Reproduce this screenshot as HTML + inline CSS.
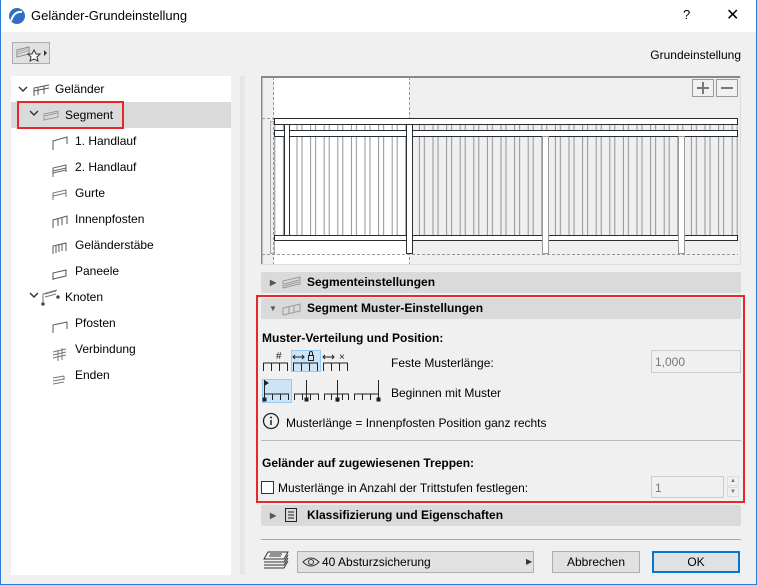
<!DOCTYPE html>
<html><head><meta charset="utf-8"><style>
*{box-sizing:border-box;margin:0;padding:0}
body{width:757px;height:585px;overflow:hidden;background:#f0f0f0;font-family:"Liberation Sans",sans-serif;font-size:12px;color:#000;position:relative}
.a{position:absolute}
.title{left:0;top:0;width:757px;height:32px;background:#fff}
.bl{left:0;top:0;width:1px;height:585px;background:#2b7cd3}
.br{right:0;top:0;width:1px;height:585px;background:#2b7cd3}
.bb{left:0;bottom:0;width:757px;height:1px;background:#2b7cd3}
.tree{left:11px;top:76px;width:220px;height:499px;background:#fff}
.ti{position:absolute;height:26px;line-height:26px;font-size:12px}
.hdr{background:#dadada;border-radius:2px;height:21px;font-weight:bold;line-height:21px}
.btn{background:#e1e1e1;border:1px solid #adadad;text-align:center;line-height:20px}
.b{font-weight:bold}
</style></head><body>
<div class="a title"></div>
<svg class="a" style="left:8px;top:7px" width="18" height="18" viewBox="0 0 18 18"><circle cx="9" cy="9" r="8" fill="#2f6fc4"/><path d="M3 14 Q6 4 14 5" stroke="#fff" stroke-width="2" fill="none"/></svg>
<div class="a" style="left:31px;top:8px;font-size:13px">Geländer-Grundeinstellung</div>
<div class="a" style="left:683px;top:7px;font-size:13px">?</div>
<div class="a" style="left:726px;top:5px;font-size:16px">✕</div>
<div class="a bl"></div><div class="a br"></div><div class="a bb"></div>

<div class="a" style="left:12px;top:42px;width:38px;height:22px;background:#e1e1e1;border:1px solid #adadad"></div>
<svg class="a" style="left:15px;top:44px" width="34" height="18"><path d="M2 6 L14 3 L14 10 L2 13Z" fill="none" stroke="#888"/><path d="M3 8 L13 5 M3 10 L13 7" stroke="#aaa"/><path d="M19 6 L21 10 L25 10 L22 13 L23 17 L19 15 L15 17 L16 13 L13 10 L17 10Z" fill="#fff" stroke="#333"/><path d="M29 6 L32 9 L29 12Z" fill="#333"/></svg>
<div class="a" style="right:16px;top:48px">Grundeinstellung</div>

<div class="a tree"></div>
<div class="a" style="left:11px;top:102px;width:220px;height:26px;background:#dadada"></div>
<div class="a" style="left:17px;top:101px;width:107px;height:28px;border:2px solid #e8262b"></div>
<div class="a" style="left:240px;top:76px;width:5px;height:499px;background:#e6e6e6"></div>
<svg class="a" style="left:16px;top:80px" width="60" height="310" fill="none" stroke="#555">
<g stroke="#333" stroke-width="1.4"><path d="M3 7 L7 11 L11 7"/><path d="M14 31 L18 35 L22 31"/><path d="M14 213 L18 217 L22 213"/></g>
<path d="M18 16 V8 L33 5 M22 15 V8 M28 14 V6 M18 11 L33 8" />
<path d="M28 40 V34 L42 31 V37Z M29 36 L41 33" stroke="#999"/>
<path d="M37 70 V61 L51 57 V64" />
<path d="M37 97 V88 L50 85 V92 M37 91 L50 88 M37 93 L50 90" stroke="#666"/>
<path d="M37 120 V113 L50 110 V117 M37 116 L50 113" stroke="#777"/>
<path d="M37 148 V140 L51 136 V144 M42 146 V139 M46 145 V138"/>
<path d="M37 174 V166 L50 163 V171 M40 166 V173 M43 165 V172 M46 164 V171"/>
<path d="M37 200 V193 L50 190 V196 L37 199Z" />
<path d="M27 224 V214 L41 210 M29 214 L40 211 M29 217 L40 214" stroke="#777"/><circle cx="27" cy="224" r="1.3" fill="#333"/><circle cx="42" cy="217" r="1.3" fill="#333"/>
<path d="M37 253 V245 L51 242 V249" />
<path d="M37 272 L50 269 M37 275 L50 272 M37 278 L50 275 M42 281 V270 M46 280 V268" stroke="#777"/>
<path d="M37 298 L48 296 M37 301 L48 299 M37 304 L48 302 M48 296 V300" stroke="#777"/>
</svg>
<div class="ti" style="left:55px;top:76px">Geländer</div>
<div class="ti" style="left:65px;top:102px">Segment</div>
<div class="ti" style="left:75px;top:128px">1. Handlauf</div>
<div class="ti" style="left:75px;top:154px">2. Handlauf</div>
<div class="ti" style="left:75px;top:180px">Gurte</div>
<div class="ti" style="left:75px;top:206px">Innenpfosten</div>
<div class="ti" style="left:75px;top:232px">Geländerstäbe</div>
<div class="ti" style="left:75px;top:258px">Paneele</div>
<div class="ti" style="left:65px;top:284px">Knoten</div>
<div class="ti" style="left:75px;top:310px">Pfosten</div>
<div class="ti" style="left:75px;top:336px">Verbindung</div>
<div class="ti" style="left:75px;top:362px">Enden</div>

<svg class="a" style="left:261px;top:76px" width="480" height="189" viewBox="261 76 480 189">
<defs><pattern id="bal" patternUnits="userSpaceOnUse" x="296.5" y="0" width="13.6" height="300"><path d="M0.5 0 V300 M5.5 0 V300" stroke="#8e9499" stroke-width="1"/></pattern></defs>
<rect x="261" y="76" width="480" height="189" fill="#efefef"/>
<rect x="274" y="77" width="135" height="187" fill="#fff"/>
<path d="M261.5 76 V264 M261 77 H741" stroke="#888" stroke-width="2"/>
<path d="M740.5 76 V264 M261 264.5 H741" stroke="#ddd"/>
<rect x="274" y="124" width="464" height="111" fill="url(#bal)"/>
<path d="M273.5 77 V264 M409.5 77 V264 M262 118.5 H274 M262 254.5 H738" stroke="#999" stroke-dasharray="3 2"/>
<rect x="270.5" y="121.5" width="4" height="132" fill="none" stroke="#aaa"/>
<rect x="274.5" y="118.5" width="463" height="6" fill="#fff" stroke="#262c30"/>
<rect x="274.5" y="130.5" width="463" height="6" fill="#fff" stroke="#262c30"/>
<rect x="274.5" y="235.5" width="463" height="5" fill="#fff" stroke="#262c30"/>
<rect x="284.5" y="124.5" width="5" height="111" fill="#fff" stroke="#262c30"/>
<rect x="406.5" y="124.5" width="6" height="129" fill="#fff" stroke="#262c30"/>
<rect x="542.5" y="136.5" width="6" height="117" fill="#fff" stroke="#999"/>
<rect x="678.5" y="136.5" width="6" height="117" fill="#fff" stroke="#999"/>
<rect x="692.5" y="79.5" width="21" height="17" fill="#f0f0f0" stroke="#999"/>
<rect x="716.5" y="79.5" width="21" height="17" fill="#f0f0f0" stroke="#999"/>
<path d="M697 88 H709 M703 82 V94 M721 88 H733" stroke="#777" stroke-width="2"/>
</svg>

<div class="a hdr" style="left:261px;top:272px;width:480px"><span style="position:absolute;left:9px;font-size:8px;color:#555">▶</span><span style="position:absolute;left:46px">Segmenteinstellungen</span></div>
<svg class="a" style="left:281px;top:275px" width="22" height="15" fill="none" stroke="#999"><path d="M2 13 V6 L19 2 V9Z M3 9 L18 5 M3 11 L18 7"/></svg>

<div class="a" style="left:256px;top:295px;width:489px;height:208px;border:2px solid #e8262b"></div>
<div class="a hdr" style="left:261px;top:298px;width:480px"><span style="position:absolute;left:8px;font-size:8px;color:#555">▼</span><span style="position:absolute;left:46px">Segment Muster-Einstellungen</span></div>
<svg class="a" style="left:281px;top:302px" width="22" height="15" fill="none" stroke="#999"><path d="M2 13 V6 L19 2 V9 L2 13 M8 12 V4 M13 11 V3"/></svg>
<div class="a b" style="left:262px;top:331px">Muster-Verteilung und Position:</div>
<div class="a" style="left:291px;top:350px;width:30px;height:22px;background:#cce4f7;border:1px solid #99c9ef"></div>
<div class="a" style="left:262px;top:379px;width:30px;height:24px;background:#cce4f7;border:1px solid #99c9ef"></div>
<svg class="a" style="left:262px;top:350px" width="120" height="55" fill="none" stroke="#222">
<path d="M1 13 H26 M1.5 13 V21 M9.5 13 V21 M17.5 13 V21 M25.5 13 V21"/><text x="14" y="9" font-size="10" fill="#222" stroke="none" font-family="Liberation Sans">#</text>
<path d="M31 13 H56 M31.5 13 V21 M39.5 13 V21 M47.5 13 V21 M55.5 13 V21 M31 7 H42 M33 5 L31 7 L33 9 M40 5 L42 7 L40 9"/><rect x="46.5" y="5.5" width="5" height="5"/><path d="M47.5 5 V3 A1.5 1.5 0 0 1 50.5 3 V5"/>
<path d="M61 13 H86 M61.5 13 V21 M69.5 13 V21 M77.5 13 V21 M85.5 13 V21 M61 7 H72 M63 5 L61 7 L63 9 M70 5 L72 7 L70 9"/><text x="77" y="10" font-size="10" fill="#222" stroke="none" font-family="Liberation Sans">×</text>
<path d="M2 44 H27 M2.5 30 V50 M10.5 44 V50 M18.5 44 V50 M26.5 44 V50"/><path d="M3 31 L6 33 L3 35Z" fill="#222"/><rect x="1" y="48" width="3" height="3" fill="#222"/>
<path d="M32 44 H57 M32.5 44 V50 M40.5 44 V50 M48.5 44 V50 M56.5 44 V50 M44.5 30 V50"/><rect x="43" y="48" width="3" height="3" fill="#222"/>
<path d="M62 44 H87 M62.5 44 V50 M69.5 44 V50 M80.5 44 V50 M86.5 44 V50 M75.5 30 V52"/><rect x="74" y="48" width="3" height="3" fill="#222"/>
<path d="M92 44 H117 M92.5 44 V50 M100.5 44 V50 M108.5 44 V50 M116.5 30 V50"/><rect x="115" y="48" width="3" height="3" fill="#222"/>
</svg>
<div class="a" style="left:391px;top:356px">Feste Musterlänge:</div>
<div class="a" style="left:391px;top:386px">Beginnen mit Muster</div>
<div class="a" style="left:651px;top:350px;width:90px;height:23px;border:1px solid #ccc;background:#f0f0f0;color:#777;padding:4px 3px">1,000</div>
<svg class="a" style="left:262px;top:412px" width="20" height="20"><circle cx="9" cy="9" r="7.5" fill="none" stroke="#222" stroke-width="1.3"/><path d="M9 8 V13" stroke="#222" stroke-width="1.5"/><circle cx="9" cy="5.5" r="1" fill="#222"/></svg>
<div class="a" style="left:286px;top:416px">Musterlänge = Innenpfosten Position ganz rechts</div>
<div class="a" style="left:261px;top:440px;width:480px;height:1px;background:#bbb"></div>
<div class="a b" style="left:262px;top:456px">Geländer auf zugewiesenen Treppen:</div>
<div class="a" style="left:261px;top:481px;width:13px;height:13px;border:1px solid #333;background:#fff"></div>
<div class="a" style="left:278px;top:481px">Musterlänge in Anzahl der Trittstufen festlegen:</div>
<div class="a" style="left:651px;top:476px;width:73px;height:22px;border:1px solid #ccc;color:#777;padding:4px 3px">1</div>
<div class="a" style="left:727px;top:476px;width:12px;height:10px;border:1px solid #ddd;font-size:6px;text-align:center;color:#777;line-height:8px">▲</div>
<div class="a" style="left:727px;top:487px;width:12px;height:10px;border:1px solid #ddd;font-size:6px;text-align:center;color:#777;line-height:8px">▼</div>

<div class="a hdr" style="left:261px;top:505px;width:480px"><span style="position:absolute;left:9px;font-size:8px;color:#555">▶</span><span style="position:absolute;left:46px">Klassifizierung und Eigenschaften</span></div>
<svg class="a" style="left:284px;top:507px" width="14" height="16" fill="none" stroke="#222"><path d="M1.5 1.5 H12.5 V14.5 H1.5Z M4 5 H10 M4 8 H10 M4 11 H10"/></svg>
<div class="a" style="left:261px;top:539px;width:480px;height:1px;background:#aaa"></div>

<svg class="a" style="left:262px;top:550px" width="28" height="22" fill="none" stroke="#333"><path d="M6 2 H26 L22 9 H2Z M2 12 H22 L26 5 M2 15 H22 L26 8 M2 18 H22 L26 11 M8 4 L20 4 M7 6 H19"/></svg>
<div class="a btn" style="left:297px;top:551px;width:237px;height:22px;text-align:left;padding-left:24px">40 Absturzsicherung</div>
<svg class="a" style="left:302px;top:556px" width="18" height="12" fill="none" stroke="#333"><path d="M1 6 Q9 -2 17 6 Q9 14 1 6Z"/><circle cx="9" cy="6" r="2.5"/></svg>
<div class="a" style="left:526px;top:557px;font-size:8px;color:#333">▶</div>
<div class="a btn" style="left:552px;top:551px;width:88px;height:22px">Abbrechen</div>
<div class="a btn" style="left:652px;top:551px;width:88px;height:22px;border:2px solid #0078d7;line-height:18px">OK</div>
</body></html>
